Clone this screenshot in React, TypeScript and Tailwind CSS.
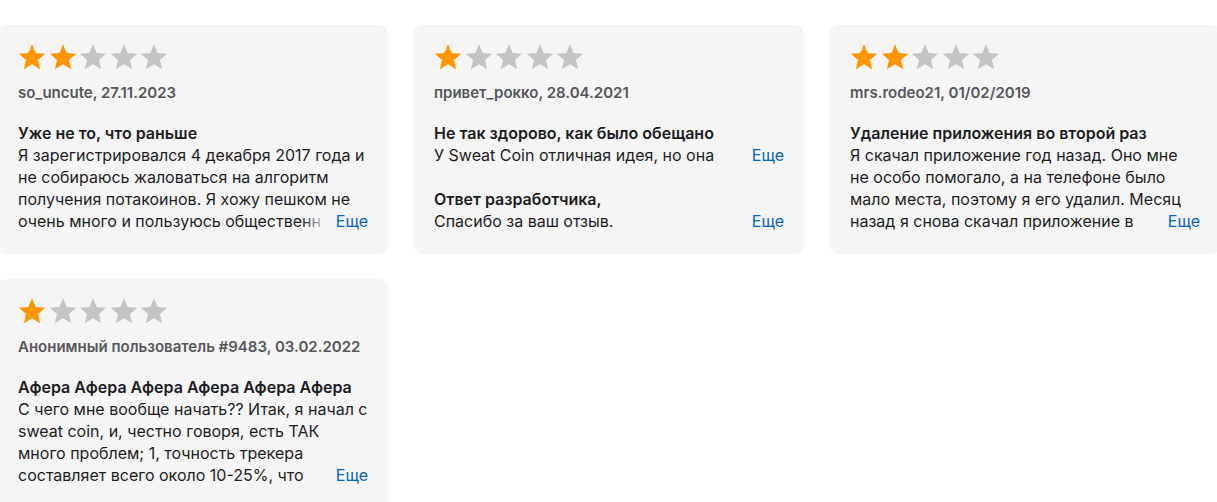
import type { ReactNode } from "react";

type Review = {
  rating: number;
  author: string;
  title: string;
  lines: string[];
  fade?: boolean;
  reply?: { title: string; lines: string[] };
};

const reviews: Review[] = [
  {
    rating: 2,
    author: "so_uncute, 27.11.2023",
    title: "Уже не то, что раньше",
    lines: [
      "Я зарегистрировался 4 декабря 2017 года и",
      "не собираюсь жаловаться на алгоритм",
      "получения потакоинов. Я хожу пешком не",
      "очень много и пользуюсь общественн",
    ],
    fade: true,
  },
  {
    rating: 1,
    author: "привет_рокко, 28.04.2021",
    title: "Не так здорово, как было обещано",
    lines: ["У Sweat Coin отличная идея, но она"],
    reply: {
      title: "Ответ разработчика,",
      lines: ["Спасибо за ваш отзыв."],
    },
  },
  {
    rating: 2,
    author: "mrs.rodeo21, 01/02/2019",
    title: "Удаление приложения во второй раз",
    lines: [
      "Я скачал приложение год назад. Оно мне",
      "не особо помогало, а на телефоне было",
      "мало места, поэтому я его удалил. Месяц",
      "назад я снова скачал приложение в",
    ],
    fade: true,
  },
  {
    rating: 1,
    author: "Анонимный пользователь #9483, 03.02.2022",
    title: "Афера Афера Афера Афера Афера Афера",
    lines: [
      "С чего мне вообще начать?? Итак, я начал с",
      "sweat coin, и, честно говоря, есть ТАК",
      "много проблем; 1, точность трекера",
      "составляет всего около 10-25%, что",
    ],
    fade: true,
  },
];

function Star({ on }: { on: boolean }) {
  return (
    <svg viewBox="0 0 24 24" className="h-[28px] w-[28px]">
      <polygon
        points="12,1 15.1,8.5 23.3,9.2 17.1,14.6 19,22.6 12,18.3 5,22.6 6.9,14.6 0.7,9.2 8.9,8.5"
        fill={on ? "#ff9500" : "#c4c4c6"}
      />
    </svg>
  );
}

function LastLine({ text, fade }: { text: string; fade?: boolean }) {
  return (
    <div className="flex items-center">
      <div className="relative flex-1 overflow-hidden whitespace-nowrap">
        {text}
        {fade && (
          <div className="absolute right-0 top-0 h-full w-[26px] bg-linear-to-r from-[#f5f5f5]/0 to-[#f5f5f5]" />
        )}
      </div>
      <span className="ml-[8px] text-[#0066cc]">Еще</span>
    </div>
  );
}

function Block({ title, lines, fade }: { title: string; lines: string[]; fade?: boolean }) {
  return (
    <div>
      <div className="font-semibold">{title}</div>
      {lines.slice(0, -1).map((l) => (
        <div key={l} className="whitespace-nowrap">
          {l}
        </div>
      ))}
      <LastLine text={lines[lines.length - 1]} fade={fade} />
    </div>
  );
}

function Card({ review }: { review: Review }) {
  return (
    <div className="rounded-[10px] bg-[#f5f5f5] px-[21px] pb-[22px] pt-[18px]">
      <div className="flex gap-[2.6px]">
        {[0, 1, 2, 3, 4].map((i) => (
          <Star key={i} on={i < review.rating} />
        ))}
      </div>
      <div className="mt-[12px] text-[15px] font-semibold leading-[20px] text-[#56565b]">
        {review.author}
      </div>
      <div className="mt-[19px] text-[16px] leading-[22px] text-[#1d1d1f]">
        <Block title={review.title} lines={review.lines} fade={review.fade} />
        {review.reply && (
          <div className="mt-[22px]">
            <Block title={review.reply.title} lines={review.reply.lines} />
          </div>
        )}
      </div>
    </div>
  );
}

function Row({ children }: { children: ReactNode }) {
  return <div className="grid grid-cols-[392px_392px_392px] gap-x-[24px]">{children}</div>;
}

export default function App() {
  return (
    <div
      className="h-[502px] overflow-hidden bg-white"
      style={{ fontFamily: "Inter, 'Noto Sans', sans-serif" }}
    >
      <div className="-ml-[3px] -mt-[200px] flex flex-col gap-[25px]">
        <Row>
          <div className="h-[200px] rounded-[10px] bg-[#f5f5f5]" />
          <div className="h-[200px] rounded-[10px] bg-[#f5f5f5]" />
          <div className="h-[200px] rounded-[10px] bg-[#f5f5f5]" />
        </Row>
        <Row>
          {reviews.slice(0, 3).map((r) => (
            <Card key={r.author} review={r} />
          ))}
        </Row>
        <Row>
          <Card review={reviews[3]} />
        </Row>
      </div>
    </div>
  );
}
